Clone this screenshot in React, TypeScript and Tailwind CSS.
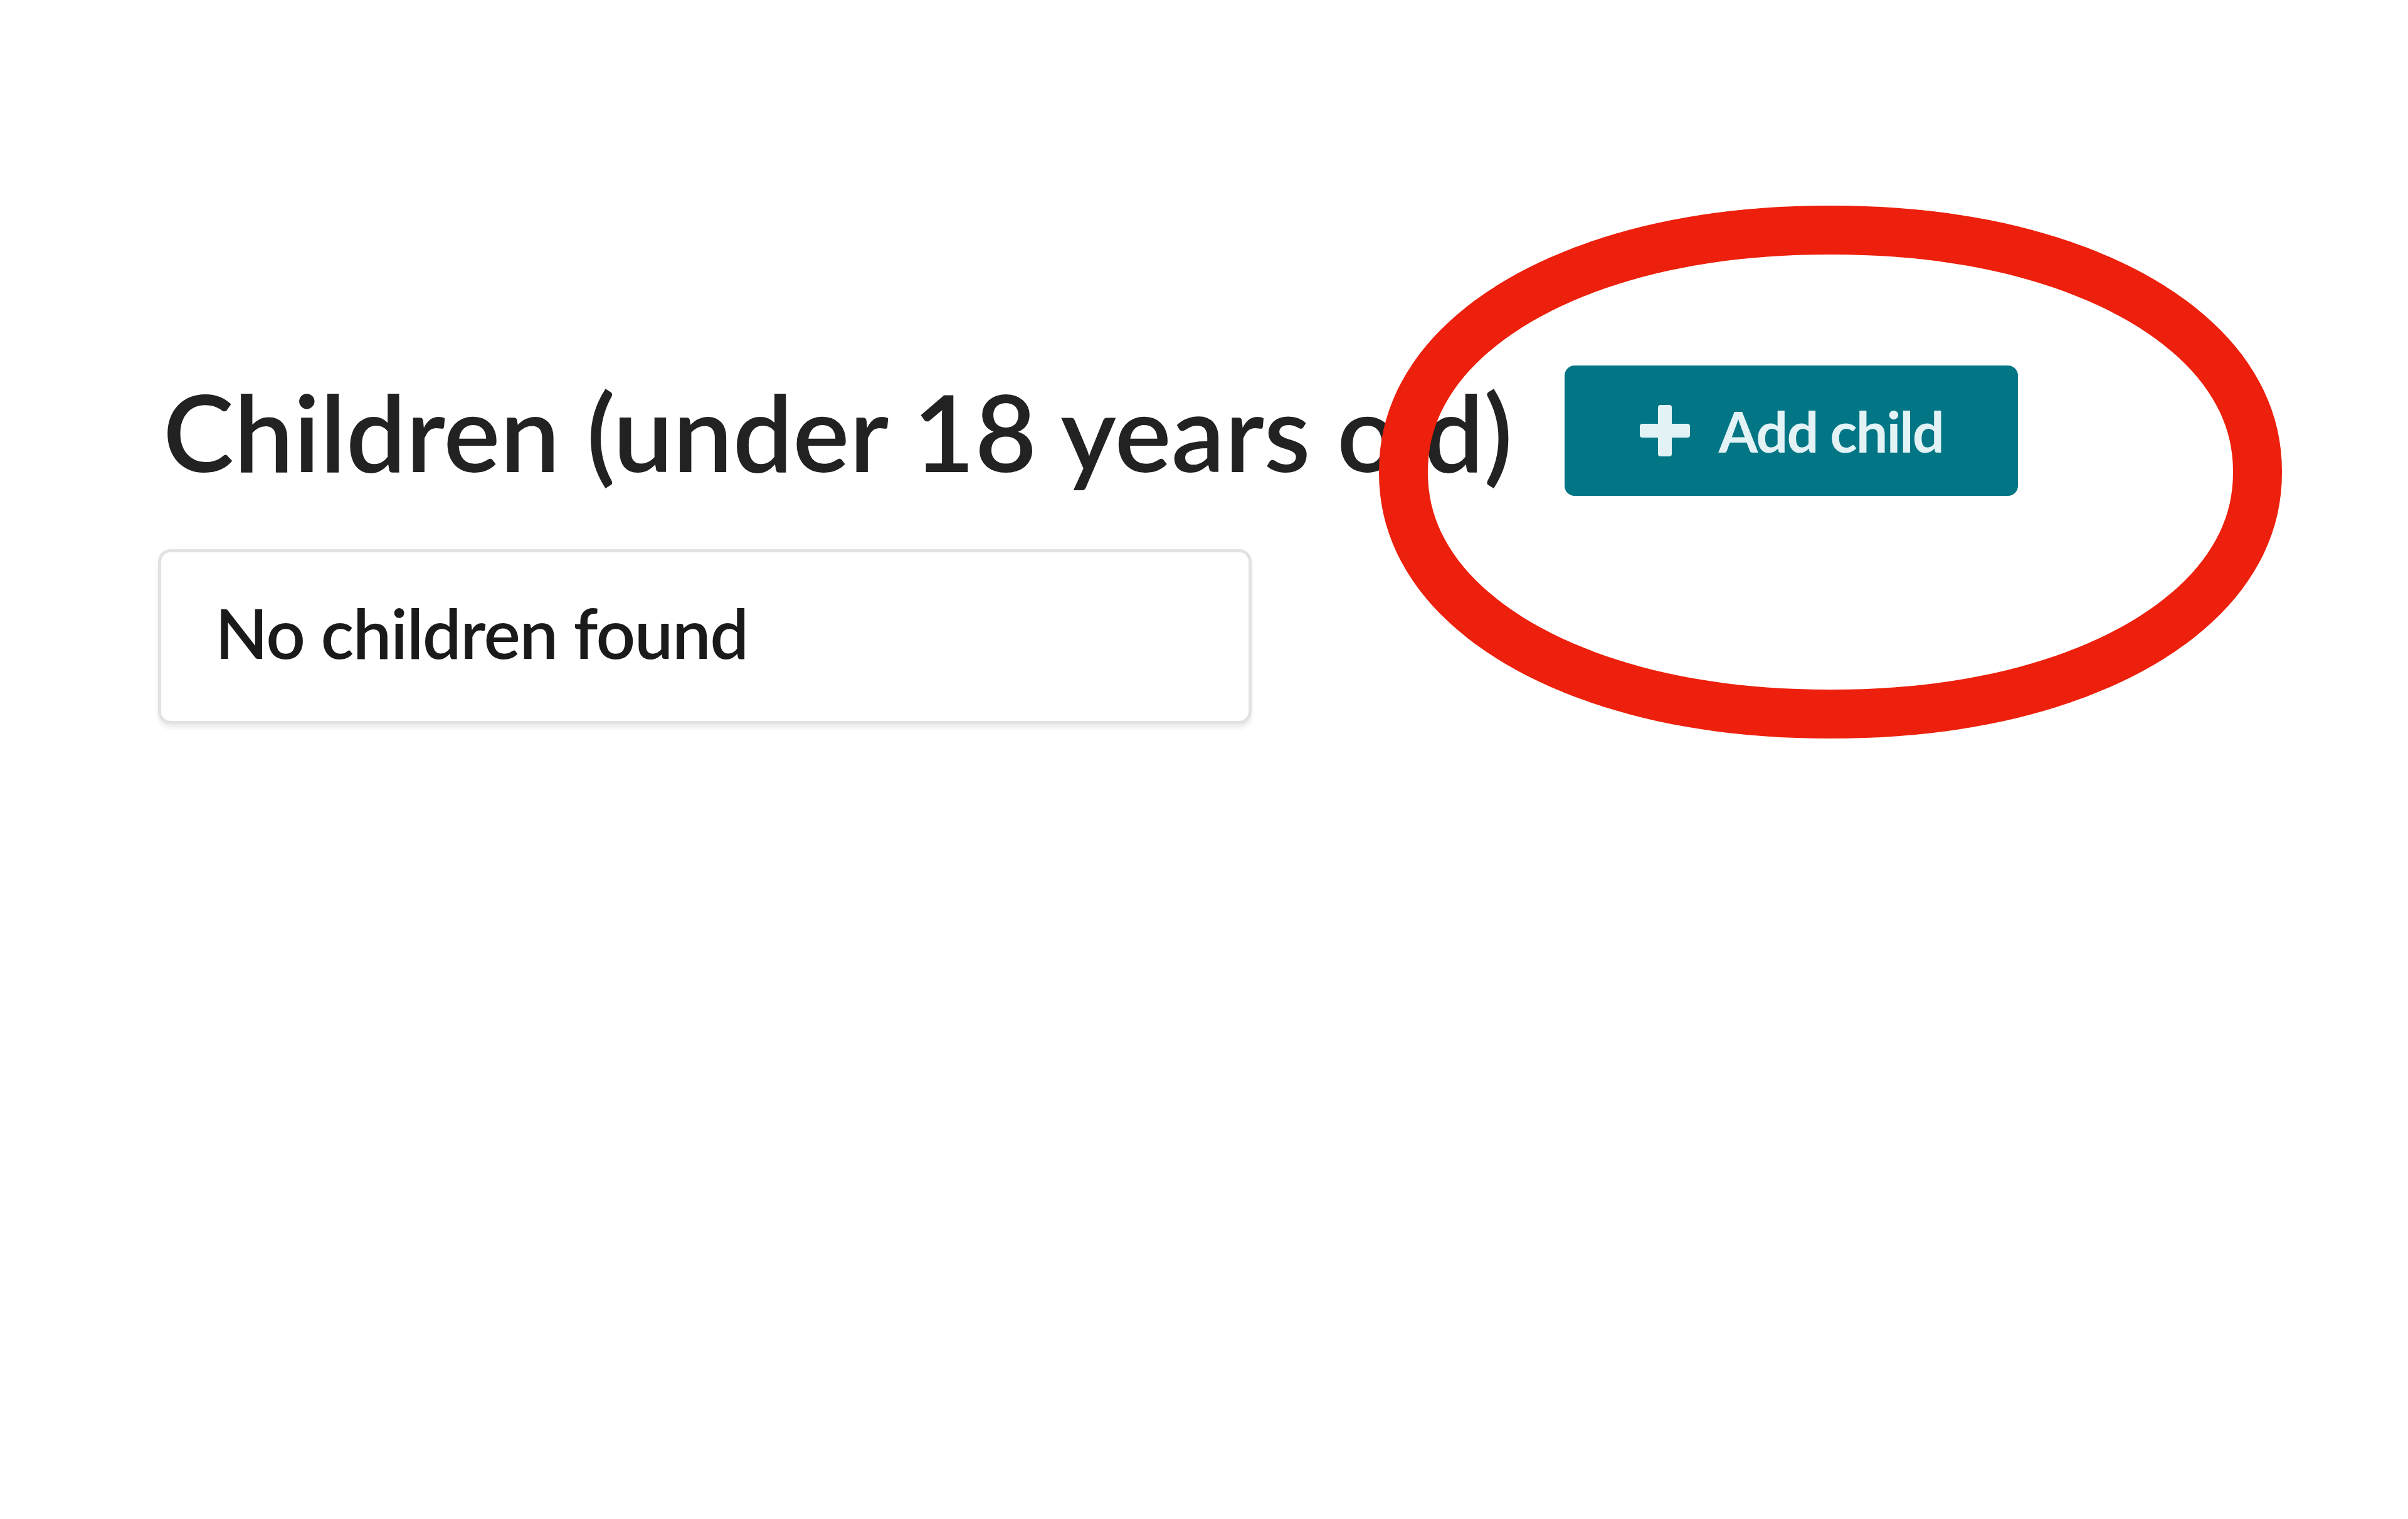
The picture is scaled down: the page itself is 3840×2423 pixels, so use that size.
// superellipse outline for the red annotation ring
function ringPath(cx: number, cy: number, rx: number, ry: number, n: number) {
  const pts: string[] = [];
  for (let i = 0; i <= 180; i++) {
    const t = (i / 180) * Math.PI * 2;
    const c = Math.cos(t);
    const s = Math.sin(t);
    const x = cx + rx * Math.sign(c) * Math.pow(Math.abs(c), 2 / n);
    const y = cy + ry * Math.sign(s) * Math.pow(Math.abs(s), 2 / n);
    pts.push(`${i === 0 ? "M" : "L"}${x.toFixed(1)} ${y.toFixed(1)}`);
  }
  return pts.join(" ") + " Z";
}

function PlusIcon() {
  return (
    <svg width="80" height="82" viewBox="0 0 80 82" fill="currentColor">
      <rect x="29" y="0" width="22" height="82" rx="4" />
      <rect x="0" y="30" width="80" height="22" rx="4" />
    </svg>
  );
}

export default function App() {
  return (
    <main className="relative min-h-screen w-full bg-white font-['Lato','Noto_Sans',sans-serif] text-[#222]">
      <section className="pl-[252px] pt-[583px]">
        <div className="flex items-center gap-[83px]">
          <h1 className="pl-[8px] text-[170px] font-semibold leading-none tracking-[0px]">
            Children (under 18 years old)
          </h1>
          <button className="flex h-[208px] w-[723px] items-center justify-center gap-[46px] rounded-[16px] bg-[#037686] text-[90px] font-bold text-[#e3f3f5]">
            <PlusIcon />
            <span className="tracking-[-2px]">Add child</span>
          </button>
        </div>
        <div className="mt-[85px] flex h-[279px] w-[1744px] items-center rounded-[20px] border-[5px] border-[#e2e2e2] px-[86px] pb-[14px] shadow-[0_6px_6px_rgba(0,0,0,0.08)]">
          <span className="text-[110px] font-semibold tracking-[-1.5px] text-[#1a1a1a]">No children found</span>
        </div>
      </section>
      <svg className="pointer-events-none absolute left-[2160px] top-[290px]" width="1520" height="920" viewBox="0 0 1520 920">
        <path d={ringPath(759, 463, 681, 386, 2.1)} fill="none" stroke="#ec200c" strokeWidth="78" strokeLinejoin="round" />
      </svg>
    </main>
  );
}
